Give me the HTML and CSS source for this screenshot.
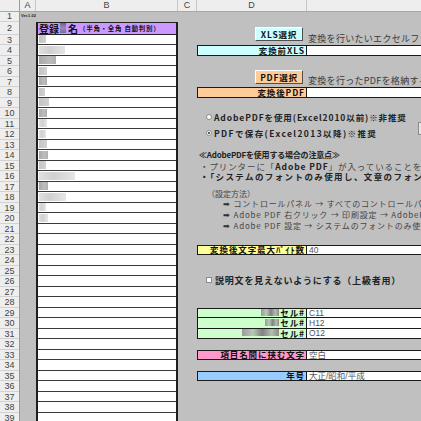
FILE: index.html
```html
<!DOCTYPE html>
<html lang="ja">
<head>
<meta charset="utf-8">
<link rel="stylesheet" href="styles.css">
</head>
<body>
<div class="sheet">
  <div class="colhdr">
    <div class="ch corner"></div>
    <div class="ch cA">A</div>
    <div class="ch cB">B</div>
    <div class="ch cC">C</div>
    <div class="ch cD">D</div>
    <div class="ch cE"></div>
  </div>
  <div class="body">
    <div class="rowhdr">
      <div class="rh r1">1</div><div class="rh r2">2</div><div class="rh">3</div><div class="rh">4</div><div class="rh">5</div>
      <div class="rh">6</div><div class="rh">7</div><div class="rh">8</div><div class="rh">9</div><div class="rh">10</div>
      <div class="rh">11</div><div class="rh">12</div><div class="rh">13</div><div class="rh">14</div><div class="rh">15</div>
      <div class="rh">16</div><div class="rh">17</div><div class="rh">18</div><div class="rh">19</div><div class="rh">20</div>
      <div class="rh">21</div><div class="rh">22</div><div class="rh">23</div><div class="rh">24</div><div class="rh">25</div>
      <div class="rh">26</div><div class="rh">27</div><div class="rh">28</div><div class="rh">29</div><div class="rh">30</div>
      <div class="rh">31</div><div class="rh">32</div><div class="rh">33</div><div class="rh">34</div><div class="rh">35</div>
      <div class="rh">36</div><div class="rh">37</div><div class="rh">38</div><div class="rh">39</div>
    </div>
    <div class="colA"><div class="ver">Ver.1.02</div></div>
    <div class="colB">
      <div class="b1"></div>
      <div class="btable">
        <div class="title"><span class="t-big">登録</span><span class="mask-t"></span><span class="t-big">名</span><span class="t-small">（半角・全角 自動判別）</span></div>
        <div class="cell"><span class="mask m-mid" style="width:7px"></span></div>
        <div class="cell"><span class="mask m-light" style="width:26px"></span></div>
        <div class="cell"><span class="mask m-dark" style="width:17px"></span></div>
        <div class="cell"><span class="mask m-mid" style="width:8px"></span></div>
        <div class="cell"><span class="mask m-dark" style="width:8px"></span></div>
        <div class="cell"><span class="mask m-mid" style="width:6px"></span></div>
        <div class="cell"><span class="mask m-mid" style="width:10px"></span></div>
        <div class="cell"><span class="mask m-dark" style="width:8px"></span></div>
        <div class="cell"><span class="mask m-light" style="width:8px"></span></div>
        <div class="cell"><span class="mask m-light" style="width:7px"></span></div>
        <div class="cell"><span class="mask m-mid" style="width:8px"></span></div>
        <div class="cell"><span class="mask m-dark" style="width:9px"></span></div>
        <div class="cell"><span class="mask m-mid" style="width:7px"></span></div>
        <div class="cell"><span class="mask m-light" style="width:36px"></span></div>
        <div class="cell"><span class="mask m-dark" style="width:9px"></span></div>
        <div class="cell"><span class="mask m-light" style="width:27px"></span></div>
        <div class="cell"><span class="mask m-light" style="width:7px"></span></div>
        <div class="cell"><span class="mask m-light" style="width:9px"></span></div>
        <div class="cell"></div><div class="cell"></div><div class="cell"></div><div class="cell"></div><div class="cell"></div>
        <div class="cell"></div><div class="cell"></div><div class="cell"></div><div class="cell"></div><div class="cell"></div>
        <div class="cell"></div><div class="cell"></div><div class="cell"></div><div class="cell"></div><div class="cell"></div>
        <div class="cell"></div><div class="cell"></div><div class="cell"></div><div class="cell"></div>
      </div>
    </div>
    <div class="colC"></div>
    <div class="colDE">
      <div class="note r3 ce t-e3">変換を行いたいエクセルファイルを選択してください</div>
      <div class="lbl r4 cd cyan">変換前XLS</div>
      <div class="val r4 ce"></div>
      <div class="note r7 ce t-e7">変換を行ったPDFを格納するフォルダを選択してください</div>
      <div class="lbl r8 cd peach">変換後PDF</div>
      <div class="val r8 ce"></div>

      <div class="txt r14 cde n-head">≪AdobePDFを使用する場合の注意点≫</div>
      <div class="txt r15 cde n-1">・プリンターに「<b>Adobe PDF</b>」が入っていることを確認してください</div>
      <div class="txt r16 cde n-2">・「システムのフォントのみ使用し、文章のフォントは使用しない」に設定</div>
      <div class="howto r17 cde">
        <div class="h0">（設定方法）</div>
        <div class="h1"><span class="arr">➡</span>コントロールパネル → すべてのコントロールパネル項目</div>
        <div class="h2"><span class="arr">➡</span>Adobe PDF 右クリック → 印刷設定 → AdobePDF設定</div>
        <div class="h3"><span class="arr">➡</span>Adobe PDF 設定 → システムのフォントのみ使用し</div>
      </div>

      <div class="lbl r23 cd yellow">変換後文字最大ﾊﾞｲﾄ数</div>
      <div class="val r23 ce">40</div>

      <div class="lbl r29 cd green"><span class="mask-g" style="width:18px"></span>セル#</div>
      <div class="val r29 ce">C11</div>
      <div class="lbl r30 cd green cont"><span class="mask-g" style="width:14px"></span>セル#</div>
      <div class="val r30 ce cont">H12</div>
      <div class="lbl r31 cd green cont"><span class="mask-g" style="width:37px"></span>セル#</div>
      <div class="val r31 ce cont">O12</div>

      <div class="lbl r33 cd pink">項目名間に挟む文字</div>
      <div class="val r33 ce">空白</div>
      <div class="lbl r35 cd blue">年号</div>
      <div class="val r35 ce">大正/昭和/平成</div>

      <div class="btn btn-xls">XLS選択</div>
      <div class="btn btn-pdf">PDF選択</div>
      <label class="radio rad1"><span class="dot"></span>AdobePDFを使用(Excel2010以前)※非推奨</label>
      <label class="radio rad2"><span class="dot on"></span>PDFで保存(Excel2013以降)※推奨</label>
      <div class="sidebtn"></div>
      <label class="chk"><span class="box"></span>説明文を見えないようにする（上級者用）</label>
    </div>
  </div>
</div>
</body>
</html>
```

FILE: styles.css
```css
* { box-sizing: border-box; margin: 0; padding: 0; }
html, body { width: 421px; height: 421px; overflow: hidden; background: #c0c0c0; }
body { font-family: "Noto Sans CJK JP", sans-serif; color: #111; }

.sheet { width: 421px; height: 421px; overflow: hidden; display: flex; flex-direction: column; }

/* column header */
.colhdr { flex: none; display: flex; height: 12px; background: #eeeeee; border-bottom: 1px solid #a8a8a8; }
.ch { flex: none; border-right: 1px solid #c6c6c6; font: 9px/11px "Liberation Sans", sans-serif; color: #444; text-align: center; }
.corner { width: 20px; border-right-color: #9a9a9a; }
.cA { width: 16px; }
.cB { width: 142px; }
.cC { width: 19px; }
.cD { width: 110px; }
.cE { flex: 1; border-right: none; }

.body { flex: 1; min-height: 0; display: flex; }

/* row header */
.rowhdr { flex: none; width: 20px; display: flex; flex-direction: column; background: #eeeeee; border-right: 1px solid #9a9a9a; }
.rh { flex: none; height: 10.5px; border-bottom: 1px solid #d2d2d2; font: 9px/10px "Liberation Sans", sans-serif; color: #444; text-align: center; }
.rh.r1 { height: 9.5px; line-height: 9px; }
.rh.r2 { height: 13px; line-height: 12px; }

.colA { flex: none; width: 16px; }
.ver { font: bold 4px/6px "Liberation Sans", sans-serif; color: #222; padding: 1px 0 0 1px; white-space: nowrap; }

/* column B list */
.colB { flex: none; width: 142px; display: flex; flex-direction: column; }
.b1 { flex: none; height: 9.5px; }
.btable { flex: 1; display: flex; flex-direction: column; border-left: 2px solid #1e1e1e; border-right: 2px solid #1e1e1e; }
.title { flex: none; height: 13px; background: #cc99ff; border-top: 1px solid #222; border-bottom: 1px solid #222; display: flex; align-items: center; padding-left: 1px; white-space: nowrap; overflow: hidden; }
.t-big { font-weight: bold; font-size: 10px; line-height: 11px; }
.t-small { font-weight: bold; font-size: 6.5px; line-height: 11px; margin-left: 1px; letter-spacing: 0.7px; }
.mask-t { display: inline-block; width: 6px; height: 10px; margin: 0 2px 0 1px; background: linear-gradient(#6f6290, #9a8ab8 50%, #7a6a9a); }
.cell { flex: none; height: 10.5px; background: #fff; border-bottom: 1px solid #3a3a3a; display: flex; align-items: center; padding-left: 1px; }
.mask { display: block; height: 8px; }
.m-light { background: linear-gradient(90deg, #e0e0e0, #d0d0d0 40%, #e6e6e6); }
.m-mid { background: linear-gradient(90deg, #c4c4c4, #d2d2d2); }
.m-dark { background: linear-gradient(90deg, #a8a8a8, #bdbdbd 60%, #b0b0b0); }

.colC { flex: none; width: 19px; }

/* D / E area */
.colDE { flex: 1; position: relative; display: grid; grid-template-columns: 110px 1fr; grid-template-rows: 9.5px 13px repeat(37, 10.5px); align-content: start; }
.cd { grid-column: 1; }
.ce { grid-column: 2; }
.cde { grid-column: 1 / 3; }
.r3 { grid-row: 3; } .r4 { grid-row: 4; } .r7 { grid-row: 7; } .r8 { grid-row: 8; }
.r14 { grid-row: 14; } .r15 { grid-row: 15; } .r16 { grid-row: 16; } .r17 { grid-row: 17 / span 5; }
.r23 { grid-row: 23; } .r29 { grid-row: 29; } .r30 { grid-row: 30; } .r31 { grid-row: 31; }
.r33 { grid-row: 33; } .r35 { grid-row: 35; }

.note { font-size: 9px; line-height: 10px; color: #3a3a3a; white-space: nowrap; padding-left: 1px; letter-spacing: 0.3px; overflow: hidden; }
.t-e3 { align-self: start; margin-top: -1px; }
.t-e7 { align-self: start; margin-top: -1px; }

.lbl { border: 1px solid #1a1a1a; font-weight: bold; font-size: 8.5px; line-height: 8px; letter-spacing: 0.9px; text-align: right; padding: 0 1px 1px 0; white-space: nowrap; display: flex; align-items: center; justify-content: flex-end; overflow: hidden; }
.val { background: #fff; border-top: 1px solid #1a1a1a; border-bottom: 1px solid #1a1a1a; font: 8.5px/8px "Liberation Sans", "Noto Sans CJK JP", sans-serif; color: #555; padding-left: 2px; white-space: nowrap; display: flex; align-items: center; overflow: hidden; }
.cont { border-top: none; }
.cyan { background: #ccffff; }
.peach { background: #ffcc99; }
.yellow { background: #ffff99; }
.green { background: #ccffcc; }
.pink { background: #ff99cc; }
.blue { background: #99ccff; }
.mask-g { display: inline-block; height: 7px; margin-right: 1px; background: linear-gradient(90deg, #9a9a9a, #b8c8b8 30%, #808080 55%, #b0c0b0 80%, #8a8a8a); }

.txt { white-space: nowrap; font-size: 8.5px; line-height: 10.5px; color: #222; padding-left: 3px; overflow: hidden; }
.n-head { font-weight: bold; font-size: 8px; letter-spacing: -0.2px; padding-left: 2px; }
.n-1 { color: #444; letter-spacing: 0.9px; }
.n-1 b { color: #222; }
.n-2 { font-weight: bold; letter-spacing: 1.4px; }

.howto { padding-top: 7px; padding-left: 10px; font-size: 8px; line-height: 10px; color: #444; white-space: nowrap; overflow: hidden; }
.howto .h1, .howto .h2, .howto .h3 { padding-left: 16px; letter-spacing: 0.8px; }
.arr { font-family: "DejaVu Sans", sans-serif; font-size: 8px; margin-right: 3px; color: #333; }

/* floating controls */
.btn { position: absolute; left: 58px; width: 48px; height: 14px; border: 1px solid; border-color: #ffffff #505050 #505050 #ffffff; font-weight: bold; font-size: 8.5px; line-height: 12px; letter-spacing: 0.8px; text-align: center; }
.btn-xls { top: 15px; background: #ccffff; }
.btn-pdf { top: 57.5px; background: #ffcc99; }

.radio { position: absolute; left: 9px; display: flex; align-items: center; height: 12px; font-weight: bold; font-size: 8.5px; letter-spacing: 0.9px; white-space: nowrap; color: #222; }
.rad1 { top: 99px; }
.rad2 { top: 114.5px; letter-spacing: 1.4px; }
.dot { width: 6px; height: 6px; border-radius: 50%; background: #fff; border: 1px solid #8a8a8a; margin-right: 2px; position: relative; }
.dot.on::after { content: ""; position: absolute; left: 1px; top: 1px; width: 2px; height: 2px; border-radius: 50%; background: #222; }

.sidebtn { position: absolute; left: 221px; top: 110px; width: 20px; height: 13px; background: #e4e4e4; border: 1px solid #8a8a8a; }

.chk { position: absolute; left: 9px; top: 262px; display: flex; align-items: center; height: 12px; font-weight: bold; font-size: 9px; letter-spacing: 0.8px; white-space: nowrap; color: #222; }
.box { width: 6px; height: 6px; background: #fff; border: 1px solid #8a8a8a; margin-right: 3px; }
```
